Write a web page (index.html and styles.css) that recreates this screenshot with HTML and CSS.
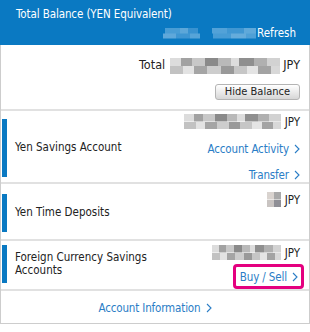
FILE: index.html
```html
<!DOCTYPE html>
<html lang="en">
<head>
  <meta charset="UTF-8" />
  <meta name="viewport" content="width=device-width, initial-scale=1.0"/>
  <title>Total Balance</title>
  <link rel="stylesheet" href="styles.css">
</head>
<body>
  <div class="panel">
    <div class="head">
      <div class="head-title">Total Balance (YEN Equivalent)</div>
      <div class="head-refresh">
        <span class="mosaic mosaic-blue"></span>
        <a href="#" class="refresh">Refresh</a>
      </div>
    </div>

    <div class="total">
      <div class="total-line">
        Total <span class="mosaic mosaic-total"></span> JPY
      </div>
      <div class="total-btn">
        <button type="button">Hide Balance</button>
      </div>
    </div>

    <!-- Yen savings -->
    <div class="acct acct-savings">
      <div class="acct-name">Yen Savings Account</div>
      <div class="acct-side">
        <div class="amount"><span class="mosaic mosaic-long"></span> JPY</div>
        <a href="#" class="link link-activity">Account Activity <svg width="6" height="10" viewBox="0 0 6 10"><path d="M1 1l4 4-4 4" fill="none" stroke="#2a7dc6" stroke-width="1.1"/></svg></a>
        <a href="#" class="link link-transfer">Transfer <svg width="6" height="10" viewBox="0 0 6 10"><path d="M1 1l4 4-4 4" fill="none" stroke="#2a7dc6" stroke-width="1.1"/></svg></a>
      </div>
    </div>

    <!-- Yen time deposits -->
    <div class="acct acct-time">
      <div class="acct-name">Yen Time Deposits</div>
      <div class="acct-side">
        <div class="amount"><span class="mosaic mosaic-short"></span> JPY</div>
      </div>
    </div>

    <!-- Foreign currency -->
    <div class="acct acct-foreign">
      <div class="acct-name">Foreign Currency Savings<br>Accounts</div>
      <div class="acct-side">
        <div class="amount"><span class="mosaic mosaic-mid"></span> JPY</div>
        <a href="#" class="link link-buy">Buy / Sell <svg width="6" height="10" viewBox="0 0 6 10"><path d="M1 1l4 4-4 4" fill="none" stroke="#2a7dc6" stroke-width="1.1"/></svg></a>
      </div>
    </div>

    <div class="foot">
      <a href="#" class="link">Account Information <svg width="6" height="10" viewBox="0 0 6 10"><path d="M1 1l4 4-4 4" fill="none" stroke="#2a7dc6" stroke-width="1.1"/></svg></a>
    </div>
  </div>
</body>
</html>
```

FILE: styles.css
```css
html, body {
  margin: 0;
  padding: 0;
  background: #fff;
}

body {
  font-family: 'DejaVu Sans Condensed', 'DejaVu Sans', sans-serif;
  font-size: 11.5px;
  color: #222;
}

.panel {
  width: 308px;
  border: 1px solid #cdcdcd;
  border-top: none;
}

.head {
  background: #0a79c2;
  color: #fff;
  margin: 0 -1px;
  padding: 6px 14px 4px 16px;
}

.head-title {
  line-height: 16px;
  letter-spacing: -0.1px;
}

.head-refresh {
  margin-top: 3px;
  display: flex;
  justify-content: flex-end;
  align-items: center;
  line-height: 16px;
}

.refresh {
  color: #fff;
  text-decoration: none;
}

/* pixelated hidden amounts */
.mosaic {
  display: inline-block;
  vertical-align: middle;
  height: 15px;
  background:
    linear-gradient(90deg, #dcdcdc 0 10%, #a2a2a2 10% 20%, #c8c8c8 20% 32%, #8a8a8a 32% 44%, #b9b9b9 44% 55%, #dddddd 55% 63%, #8f8f8f 63% 76%, #b0b0b0 76% 88%, #d2d2d2 88% 100%) top / 100% 50% no-repeat,
    linear-gradient(90deg, #c2c2c2 0 12%, #e3e3e3 12% 22%, #a5a5a5 22% 34%, #cdcdcd 34% 46%, #999999 46% 58%, #c6c6c6 58% 70%, #e4e4e4 70% 80%, #a3a3a3 80% 92%, #d8d8d8 92% 100%) bottom / 100% 50% no-repeat;
}

.mosaic-blue {
  width: 97px;
  height: 11px;
  margin-right: 1px;
  opacity: 0.55;
  background:
    linear-gradient(90deg, #0a79c2 0 6%, #7dbbe6 6% 22%, #9fcdec 22% 30%, #5fa8dc 30% 40%, #0a79c2 40% 55%, #8dc4ea 55% 70%, #6db0e0 70% 88%, #a6d1ee 88% 100%) top / 100% 50% no-repeat,
    linear-gradient(90deg, #0a79c2 0 4%, #a5d0ee 4% 18%, #6aafe0 18% 32%, #94c8eb 32% 42%, #0a79c2 42% 56%, #7ab9e5 56% 74%, #b0d6f0 74% 90%, #88c1e8 90% 100%) bottom / 100% 50% no-repeat;
}

.total {
  padding: 12px 9px 9px 0;
  text-align: right;
}

.total-line {
  line-height: 16px;
  font-size: 12.5px;
}

.mosaic-total {
  width: 110px;
  height: 16px;
  margin: 0 0 0 1px;
}

.total-btn {
  margin-top: 10px;
  line-height: 0;
}

.total-btn button {
  font-family: inherit;
  font-size: 11px;
  line-height: 14px;
  color: #222;
  height: 16px;
  padding: 0 9px;
  border: 1px solid #b4b4b4;
  border-radius: 3px;
  background: linear-gradient(#ffffff, #e9e9e9 55%, #d6d6d6);
}

.acct {
  display: flex;
  justify-content: space-between;
  border-top: 2px solid #e1e1e1;
  padding: 0 9px 0 1px;
}

.acct-name {
  border-left: 5px solid #0a79c2;
  padding-left: 8px;
  display: flex;
  align-items: center;
  line-height: 13px;
}

.acct-side {
  display: flex;
  flex-direction: column;
  align-items: flex-end;
}

.amount {
  height: 16px;
  line-height: 16px;
  display: flex;
  align-items: center;
}

.amount .mosaic {
  margin-right: 4px;
}

.mosaic-long { width: 97px; }
.mosaic-mid { width: 69px; }

.mosaic-short {
  width: 14px;
  background:
    linear-gradient(90deg, #d9d3cf 0 50%, #a9a9a9 50% 100%) top / 100% 50% no-repeat,
    linear-gradient(90deg, #c9c4c2 0 50%, #8f8f96 50% 100%) bottom / 100% 50% no-repeat;
}

.link {
  color: #2a7dc6;
  text-decoration: none;
  line-height: 14px;
  white-space: nowrap;
  letter-spacing: -0.15px;
}

.link svg {
  margin-left: 2px;
  vertical-align: -1px;
}

/* per-account spacing */
.acct-savings .acct-name { margin: 8px 0 5px; height: 58px; }
.acct-savings .acct-side { padding-top: 3px; }
.link-activity { margin-top: 12px; }
.link-transfer { margin-top: 12px; }

.acct-time .acct-name { margin: 10px 0 7px; height: 38px; }
.acct-time .acct-side { padding-top: 8px; }

.acct-foreign .acct-name { margin: 4px 0 6px; height: 38px; }
.acct-foreign .acct-side { padding-top: 4px; }

.link-buy {
  margin: 3px -4px 0 0;
  padding: 3px 3px 2px 4px;
  border: 3px solid #e4007f;
  border-radius: 4px;
}

.foot {
  border-top: 2px solid #e1e1e1;
  text-align: center;
  padding: 10px 0 8px;
}
```
